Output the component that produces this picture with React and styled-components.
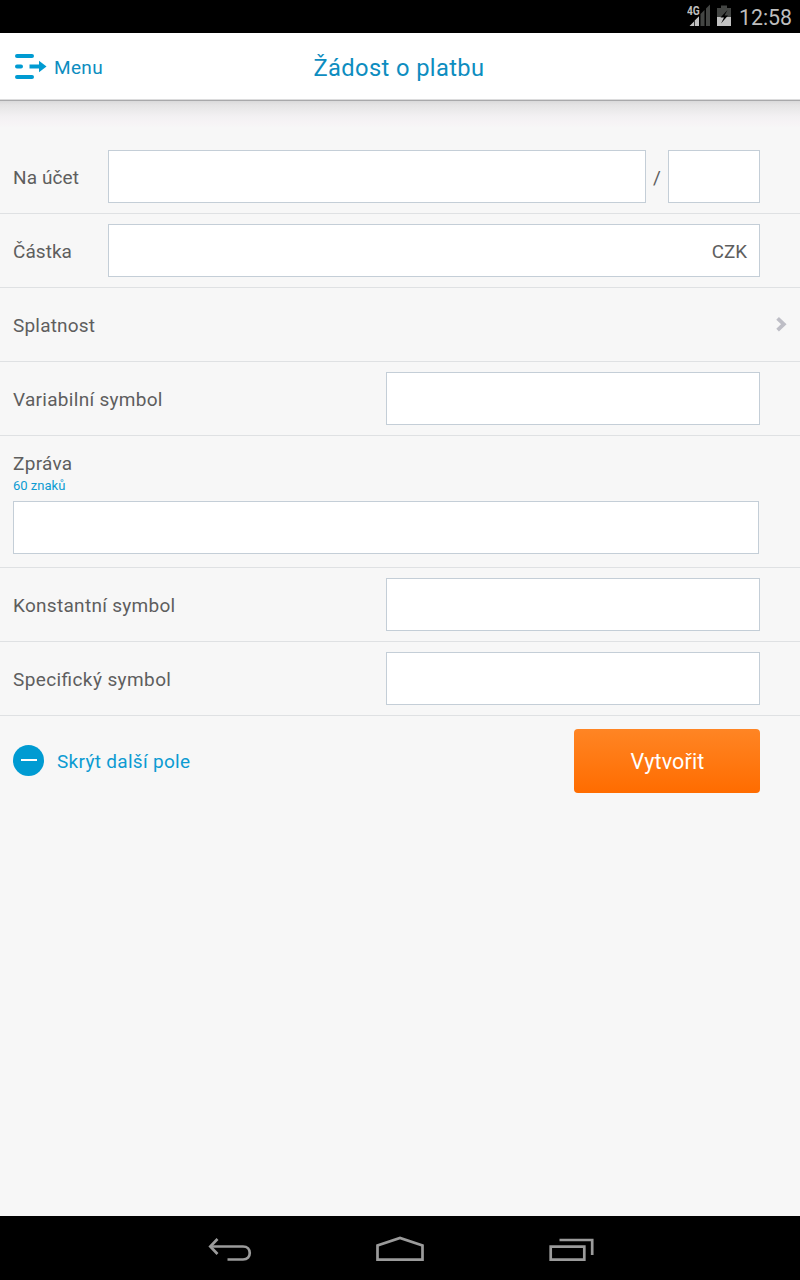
import React from "react";
import styled, { createGlobalStyle } from "styled-components";

const GlobalStyle = createGlobalStyle`
  * { box-sizing: border-box; }
  body {
    margin: 0;
    background: #f7f7f7;
    font-family: Roboto, "Liberation Sans", sans-serif;
    font-feature-settings: "liga" 1;
  }
`;

const Screen = styled.div`
  width: 800px;
  height: 1280px;
  display: flex;
  flex-direction: column;
  background: #f7f7f7;
  overflow: hidden;
`;

const StatusBar = styled.div`
  height: 33px;
  flex: none;
  background: #000;
  display: flex;
  align-items: flex-start;
  justify-content: flex-end;
  padding-right: 8px;
`;

const Clock = styled.span`
  color: #bebebe;
  font-size: 21.3px;
  line-height: 36px;
  width: 53px;
  margin-left: 6px;
  white-space: nowrap;
`;

const Header = styled.header`
  height: 68px;
  flex: none;
  display: grid;
  grid-template-columns: 200px 1fr 200px;
  align-items: center;
  background: #fff;
  border-bottom: 1px solid #a9a9ab;
  box-shadow: inset 0 -1px 0 #dcdcdd;
`;

const HeaderShade = styled.div`
  height: 39px;
  flex: none;
  background: linear-gradient(#dadadb 0, #e5e4e5 4px, #ebeaeb 9px, #f2f0f2 15px, #f6f3f5 21px, #f7f7f7 27px);
`;

const MenuButton = styled.button`
  display: flex;
  align-items: center;
  gap: 7px;
  border: 0;
  background: none;
  padding: 0 0 0 15px;
  font: 19px/24px Roboto, sans-serif;
  letter-spacing: 0.35px;
  color: #0d8dc0;
`;

const MenuText = styled.span`
  padding-top: 2px;
`;

const Title = styled.h1`
  margin: 2px 2px 0 0;
  text-align: center;
  font-size: 23.7px;
  line-height: 30px;
  font-weight: 400;
  letter-spacing: 0.38px;
  color: #0d8dc0;
`;

const Form = styled.main`
  flex: 1;
`;

const Row = styled.div`
  height: 74px;
  display: flex;
  align-items: center;
  border-bottom: 1px solid #dfe1e3;
  padding: 0 40px 0 13px;
`;

const Label = styled.label`
  width: ${(p) => p.$width || "auto"};
  flex: none;
  font-size: 19px;
  line-height: 24px;
  letter-spacing: ${(p) => p.$spacing || "0.29px"};
  color: #5e5e5e;
  padding-top: 3px;
`;

const Field = styled.div`
  height: 53px;
  width: ${(p) => p.$width};
  flex: none;
  display: flex;
  align-items: center;
  justify-content: flex-end;
  padding: 2px 12px 0 0;
  border: 1px solid #c4ced7;
  background: #fff;
  color: #5e5e5e;
  font-size: 18.8px;
  line-height: 22px;
`;

const Slash = styled.span`
  width: 22px;
  text-align: center;
  font-size: 19px;
  padding-top: 1px;
  color: #5e5e5e;
`;

const PickerRow = styled(Row)`
  justify-content: space-between;
  padding-right: 12px;
`;

const MessageRow = styled(Row)`
  height: 132px;
  flex-direction: column;
  align-items: flex-start;
  justify-content: flex-start;
  padding-top: 13px;
`;

const Hint = styled.span`
  font-size: 13px;
  line-height: 16px;
  margin: 2px 0 7px;
  color: #0c9bd2;
`;

const Actions = styled.div`
  display: flex;
  align-items: flex-start;
  justify-content: space-between;
  padding: 13px 40px 0 13px;
`;

const ToggleFields = styled.button`
  display: flex;
  align-items: center;
  gap: 13px;
  border: 0;
  padding: 0;
  height: 64px;
  background: none;
  font: 19px/24px Roboto, sans-serif;
  letter-spacing: 0.3px;
  color: #0c9bd2;
`;

const ToggleText = styled.span`
  padding-top: 2px;
`;

const MinusBadge = styled.span`
  width: 31px;
  height: 31px;
  margin-top: -1px;
  border-radius: 50%;
  display: grid;
  place-items: center;
  background: #009bd2;
  &::before { content: ""; width: 16px; height: 2px; margin-top: -1px; background: #fff; }
`;

const SubmitButton = styled.button`
  width: 186px;
  height: 64px;
  border: 0;
  border-radius: 4px;
  padding: 2px 0 0 1px;
  background: linear-gradient(#ff8524, #ff6c00);
  color: #fff;
  font: 21.5px/26px Roboto, sans-serif;
  letter-spacing: 0.15px;
`;

const NavBar = styled.nav`
  height: 64px;
  flex: none;
  display: grid;
  grid-template-columns: 314px 172px 314px;
  background: #000;
`;

const NavItem = styled.div`
  display: flex;
  justify-content: ${(p) => p.$align || "center"};
  padding: ${(p) => p.$pad || "0"};
`;

const SignalIcon = () => (
  <svg width="46" height="33" viewBox="687 0 46 33">
    <path d="M706 8.5 710 4.5V26H706Z M700.5 14 704.5 10V26H700.5Z" fill="#434543" />
    <path d="M689.5 26 694 21.5V26Z M694.7 20.5 699 16.2V26H694.7Z" fill="#c2c2c2" />
    <g transform="translate(687 15) scale(0.85 1)">
      <text fontFamily="Roboto" fontSize="12" fontWeight="700" fill="#bebebe">4G</text>
    </g>
    <path d="M717 8H721V5.5H727V8H731V17H717Z" fill="#434543" />
    <path d="M717 17H731V26H717Z" fill="#c2c2c2" />
    <path d="M727.5 10 720.5 17.5H724L721 23.5 728 15.5H724.5Z" fill="#000" />
  </svg>
);

const MenuIcon = () => (
  <svg width="32" height="26" viewBox="0 0 32 26">
    <g stroke="#009bd2" strokeWidth="4" strokeLinecap="round">
      <path d="M2 2H17M2 12.5H6M2 23H17" />
      <path d="M14.5 12.5H25" strokeLinecap="butt" />
    </g>
    <path d="M24 6.8 31.5 12.5 24 18.2Z" fill="#009bd2" />
  </svg>
);

const ChevronIcon = () => (
  <svg width="12" height="18" viewBox="0 0 12 18">
    <path d="M1.6 2.3 7.8 8.2 1.6 14.1" fill="none" stroke="#bebec6" strokeWidth="3.8" />
  </svg>
);

const BackIcon = () => (
  <svg width="44" height="26" viewBox="0 0 44 26" fill="none" stroke="#9b9b9b" strokeWidth="2.7">
    <path d="M2 9.5H35C44 9.5 44 22.5 35 22.5H19.5" />
    <path d="M9.5 2 2.3 9.5 9.5 17" />
  </svg>
);

const HomeIcon = () => (
  <svg width="48" height="26" viewBox="0 0 48 26">
    <path d="M1.5 23.6V9.5L24 2 46.5 9.5V23.6Z" fill="none" stroke="#9b9b9b" strokeWidth="2.7" />
  </svg>
);

const RecentsIcon = () => (
  <svg width="46" height="24" viewBox="0 0 46 24" fill="none" stroke="#9b9b9b" strokeWidth="2.7">
    <path d="M1.7 8.7H35.3V21.6H1.7ZM10.5 2H43.2V17" />
  </svg>
);

export default function App() {
  return (
    <>
      <GlobalStyle />
      <Screen>
        <StatusBar>
          <SignalIcon />
          <Clock>12:58</Clock>
        </StatusBar>
        <Header>
          <MenuButton><MenuIcon /><MenuText>Menu</MenuText></MenuButton>
          <Title>Žádost o platbu</Title>
        </Header>
        <HeaderShade />
        <Form>
          <Row>
            <Label $width="95px" $spacing="0.12px">Na účet</Label>
            <Field $width="538px" />
            <Slash>/</Slash>
            <Field $width="92px" />
          </Row>
          <Row>
            <Label $width="95px" $spacing="0.05px">Částka</Label>
            <Field $width="652px">CZK</Field>
          </Row>
          <PickerRow>
            <Label $spacing="0.2px">Splatnost</Label>
            <ChevronIcon />
          </PickerRow>
          <Row>
            <Label $width="373px">Variabilní symbol</Label>
            <Field $width="374px" />
          </Row>
          <MessageRow>
            <Label>Zpráva</Label>
            <Hint>60 znaků</Hint>
            <Field $width="746px" />
          </MessageRow>
          <Row>
            <Label $width="373px">Konstantní symbol</Label>
            <Field $width="374px" />
          </Row>
          <Row>
            <Label $width="373px" $spacing="0.4px">Specifický symbol</Label>
            <Field $width="374px" />
          </Row>
          <Actions>
            <ToggleFields><MinusBadge /><ToggleText>Skrýt další pole</ToggleText></ToggleFields>
            <SubmitButton>Vytvořit</SubmitButton>
          </Actions>
        </Form>
        <NavBar>
          <NavItem $align="flex-end" $pad="21px 62px 0 0"><BackIcon /></NavItem>
          <NavItem $pad="20px 0 0"><HomeIcon /></NavItem>
          <NavItem $align="flex-start" $pad="22px 0 0 63px"><RecentsIcon /></NavItem>
        </NavBar>
      </Screen>
    </>
  );
}
